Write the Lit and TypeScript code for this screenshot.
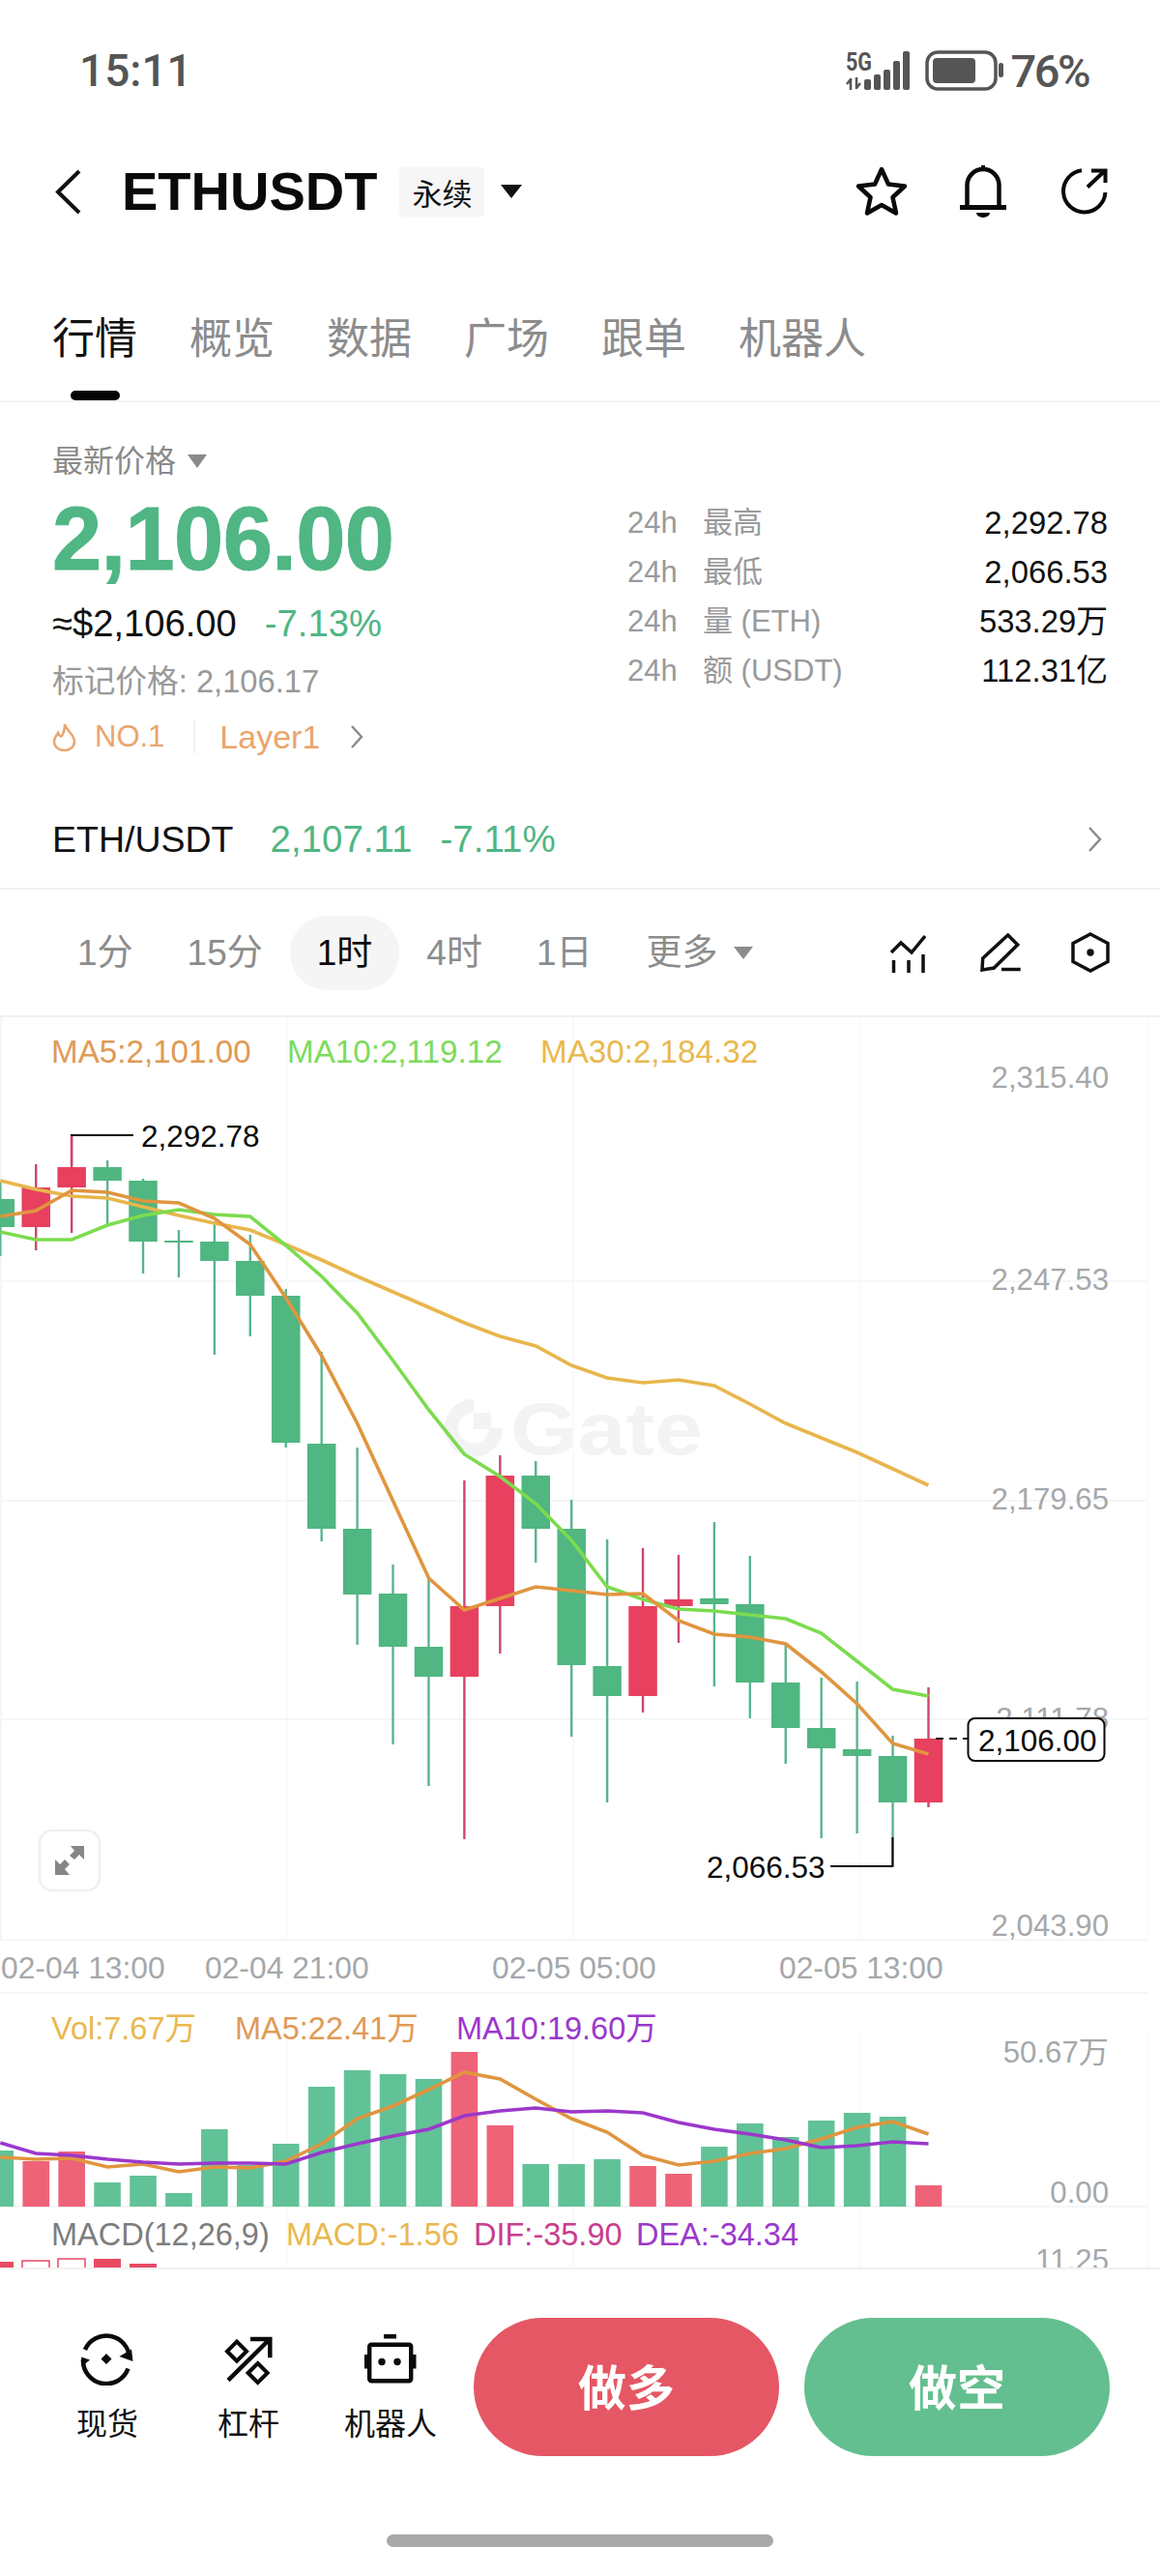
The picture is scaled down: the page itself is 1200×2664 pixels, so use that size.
import { LitElement, html, css, svg } from "lit";
import { customElement } from "lit/decorators.js";

const X = (i: number) => 0.3 + 36.93 * i;
type C = [number, number, number, number, number];
// dir(1 red, 0 green), body top, body bottom, wick top, wick bottom
const candles: C[] = [
  [0,1240,1269,1222,1299],[1,1228,1269,1204,1293],[1,1207,1228,1174,1275],[0,1207,1221,1200,1267],
  [0,1221,1284,1219,1317],[0,1283,1285,1272,1321],[0,1284,1304,1263,1401],[0,1304,1340,1277,1382],
  [0,1340,1492,1333,1497],[0,1493,1581,1398,1594],[0,1581,1649,1497,1701],[0,1648,1703,1618,1804],
  [0,1703,1734,1632,1847],[1,1661,1734,1531,1902],[1,1526,1661,1505,1710],[0,1526,1581,1511,1616],
  [0,1581,1722,1551,1796],[0,1723,1754,1592,1864],[1,1661,1754,1601,1771],[1,1654,1661,1608,1699],
  [0,1653,1659,1574,1744],[0,1659,1740,1609,1777],[0,1740,1787,1699,1824],[0,1787,1808,1735,1901],
  [0,1809,1816,1739,1896],[0,1816,1864,1795,1930],[1,1798,1864,1745,1869],
];
const ma5 = [1258,1252,1231,1233,1242,1244,1260,1287,1342,1402,1472,1552,1632,1665,1653,1641,1645,1649,1648,1676,1690,1693,1700,1729,1762,1803,1814];
const ma10 = [1274,1282,1282,1267,1257,1251,1256,1258,1288,1320,1358,1407,1458,1504,1527,1555,1593,1641,1654,1664,1666,1670,1674,1689,1718,1747,1754];
const ma30 = [1221,1230,1237,1239,1248,1257,1265,1272,1287,1303,1320,1336,1352,1368,1382,1392,1412,1425,1430,1427,1433,1452,1472,1487,1502,1519,1536];
const vols: [number, number][] = [
  [0,2224],[1,2235],[1,2225],[0,2257],[0,2250],[0,2268],[0,2202],[0,2239],[0,2217],[0,2158],[0,2141],[0,2145],[0,2150],[1,2122],
  [1,2198],[0,2238],[0,2238],[0,2233],[1,2240],[1,2248],[0,2220],[0,2196],[0,2210],[0,2193],[0,2185],[0,2189],[1,2260],
];
const volMa5 = [2231,2233,2232,2241,2238,2246,2241,2242,2235,2217,2191,2178,2161,2143,2150,2171,2191,2205,2229,2239,2235,2227,2222,2212,2200,2194,2207];
const volMa10 = [2216,2227,2229,2233,2236,2238,2237,2237,2238,2226,2217,2209,2202,2188,2183,2180,2184,2183,2185,2195,2202,2207,2213,2221,2219,2215,2217];
const pts = (a: number[]) => a.map((y, i) => `${X(i).toFixed(1)},${y}`).join(" ");

@customElement("app-root")
export class AppRoot extends LitElement {
  static styles = css`
    :host { display: block; width: 1200px; height: 2664px; background: #fff; overflow: hidden;
      font-family: "Liberation Sans", "Noto Sans CJK SC", sans-serif; color: #111; }
    svg { display: block; flex: none; }
    .status { height: 146px; display: flex; align-items: center; padding: 0 74px 0 82px; color: #555; }
    .time { font-family: Roboto, sans-serif; font-size: 46px; font-weight: 500; flex: 1; }
    .pct { font-family: Roboto, sans-serif; font-size: 47px; font-weight: 500; margin-left: 7px; letter-spacing: -2.5px; }
    .signal { overflow: visible; }
    .sig-t { font-family: Roboto, sans-serif; font-size: 26px; font-weight: 700; fill: #555; }
    .nav { height: 104px; display: flex; align-items: center; padding: 0 54px 0 57px; }
    .title { font-size: 56px; font-weight: 700; margin-left: 42px; color: #0a0a0a; line-height: 64px; }
    .tag { margin-left: 23px; width: 88px; height: 51px; background: #f6f6f6; border-radius: 4px; font-size: 31px; display: flex; align-items: center; justify-content: center; color: #111; }
    .caret { margin-left: 17px; }
    .nav-icons { margin-left: auto; display: flex; align-items: center; }
    .tabs { display: flex; gap: 54px; padding: 75px 0 0 54px; border-bottom: 2px solid #f3f3f3; }
    .tab { display: flex; flex-direction: column; align-items: center; font-size: 44px; line-height: 52px; color: #8c8c8c; }
    .tab.on { color: #111; }
    .ind { margin-top: 27px; width: 51px; height: 10px; border-radius: 5px; }
    .on .ind { background: #050505; }
    .info { display: flex; justify-content: space-between; padding: 39px 54px 0; }
    .left { display: flex; flex-direction: column; }
    .label { display: flex; align-items: center; gap: 12px; font-size: 32px; line-height: 44px; color: #8a8a8a; }
    .price { margin-top: 12px; font-size: 92px; line-height: 92px; font-weight: 700; color: #4fb684; letter-spacing: -0.6px; -webkit-text-stroke: 1px #4fb684; }
    .sub { margin-top: 20px; font-size: 38.2px; line-height: 44px; color: #111; display: flex; gap: 29px; }
    .green { color: #4fb684; }
    .mark { margin-top: 16px; font-size: 32.7px; line-height: 44px; color: #999; }
    .hot { margin-top: 13px; height: 44px; display: flex; align-items: center; font-size: 31px; line-height: 44px; color: #e9a56d; }
    .no { margin-left: 19px; }
    .layer { font-size: 34px; }
    .sep { width: 2px; height: 34px; background: #f1f1f1; margin: 0 25px 0 30px; }
    .chev { margin-left: 31px; }
    .stats { width: 497px; padding-top: 60px; display: grid; grid-template-columns: 78px 1fr auto; grid-auto-rows: 51px; line-height: 51px; font-size: 31px; color: #9a9a9a; }
    .stats .v { color: #111; font-size: 32.8px; text-align: right; }
    .pair { display: flex; align-items: center; height: 44px; padding: 62px 60px 28px 54px; font-size: 37.5px; border-bottom: 2px solid #f1f1f1; }
    .pair .n { color: #111; }
    .pair .g { margin-left: 38px; font-size: 38.5px; color: #4fb684; display: flex; gap: 29px; }
    .pair svg { margin-left: auto; }
    .ivals { height: 130px; display: flex; align-items: center; padding: 0 52px; border-bottom: 2px solid #f1f1f1; }
    .iv { font-size: 37px; height: 77px; line-height: 77px; padding: 0 28px; color: #8c8c8c; border-radius: 38px; display: flex; align-items: center; gap: 17px; }
    .iv.on { background: #f5f5f5; color: #0a0a0a; }
    .tools { margin-left: auto; display: flex; align-items: center; }
    .chart text { font-family: "Liberation Sans", "Noto Sans CJK SC", sans-serif; }
    .ax { font-size: 31.2px; fill: #a5a8ab; }
    .tm { font-size: 31.8px; fill: #a5a8ab; }
    .lg { font-size: 32.5px; }
    .lg2 { font-size: 33.2px; }
    .lb { font-size: 31.5px; fill: #0a0a0a; }
    .wm { font-size: 76px; font-weight: 700; fill: #f1f3f4; }
    .chart { border-bottom: 2px solid #f1f1f1; }
    .foot { display: flex; flex-direction: column; align-items: center; }
    .row { display: flex; width: 100%; box-sizing: border-box; padding: 50px 52px 0 38px; }
    .tool { width: 146px; display: flex; flex-direction: column; align-items: center; padding-top: 16px; font-size: 32px; line-height: 44px; color: #111; }
    .tool svg { height: 54px; margin-bottom: 18px; }
    .tool.w { width: 148px; margin-right: 12px; }
    .btn { width: 316px; height: 143px; box-sizing: border-box; padding-bottom: 5px; border-radius: 72px; font-size: 50px; font-weight: 700; color: #fff; display: flex; align-items: center; justify-content: center; }
    .btn.r { background: #e55764; margin-right: 26px; }
    .btn.g { background: #63bf8f; }
    .home { margin-top: 81px; width: 400px; height: 13px; border-radius: 7px; background: #a9a9a9; }
  `;

  chart() {
    const col = [297, 593, 890, 1187];
    return svg`
      ${[1325, 1552, 1778, 2006, 2061, 2282].map((y) => svg`<line x1="0" x2="1187" y1=${y} y2=${y} stroke="#f5f6f7" stroke-width="2"/>`)}
      ${col.map((x) => svg`<line x1=${x} x2=${x} y1="1052" y2="2006" stroke="#f7f8f8" stroke-width="1.5"/>`)}
      ${col.map((x) => svg`<line x1=${x} x2=${x} y1="2106" y2="2345" stroke="#f7f8f8" stroke-width="1.5"/>`)}
      <line x1="1" x2="1" y1="1052" y2="2006" stroke="#f5f6f7" stroke-width="2"/>

      <path d="M490 1453.700A23 23 0 1 0 513 1476.700" fill="none" stroke="#f1f3f4" stroke-width="14"/>
      <rect x="490" y="1461" width="18" height="17" fill="#f1f3f4"/>
      <text class="wm" x="528" y="1504" textLength="199" lengthAdjust="spacingAndGlyphs">Gate</text>

      <text class="ax" x="1147" y="1125" text-anchor="end">2,315.40</text>
      <text class="ax" x="1147" y="1334" text-anchor="end">2,247.53</text>
      <text class="ax" x="1147" y="1561" text-anchor="end">2,179.65</text>
      <text class="ax" x="1147" y="1788" text-anchor="end">2,111.78</text>
      <text class="ax" x="1147" y="2002" text-anchor="end">2,043.90</text>

      ${candles.map(([d, t, b, wt, wb], i) => svg`
        <line x1=${X(i)} x2=${X(i)} y1=${wt} y2=${wb} stroke=${d ? "#d0456a" : "#58b48c"} stroke-width="2.400"/>
        <rect x=${X(i) - 14.75} y=${t} width="29.500" height=${b - t} fill=${d ? "#e8405f" : "#50b682"}/>
      `)}
      <polyline points=${pts(ma30)} fill="none" stroke="#e8b64c" stroke-width="3.600"/>
      <polyline points=${pts(ma10)} fill="none" stroke="#7ddb4f" stroke-width="3.600"/>
      <polyline points=${pts(ma5)} fill="none" stroke="#e0953f" stroke-width="3.600"/>

      <text class="lg2" x="53" y="1099" fill="#e09a55">MA5:2,101.00</text>
      <text class="lg2" x="297" y="1099" fill="#7ddb5c">MA10:2,119.12</text>
      <text class="lg2" x="559" y="1099" fill="#e9b84f">MA30:2,184.32</text>

      <polyline points="74,1194 74,1174 138,1174" fill="none" stroke="#0a0a0a" stroke-width="2"/>
      <line x1="74" x2="74" y1="1175" y2="1205" stroke="#d0456a" stroke-width="2.400"/>
      <text class="lb" x="146" y="1186">2,292.78</text>
      <polyline points="923.400,1900 923.400,1930 859,1930" fill="none" stroke="#0a0a0a" stroke-width="2"/>
      <text class="lb" x="731" y="1942">2,066.53</text>
      <line x1="968" x2="1001" y1="1798" y2="1798" stroke="#0a0a0a" stroke-width="2" stroke-dasharray="8 6"/>
      <rect x="1001.500" y="1777" width="141" height="44" rx="7" fill="#fff" stroke="#0a0a0a" stroke-width="2"/>
      <text class="lb" x="1012" y="1811">2,106.00</text>

      <rect x="41" y="1893" width="62" height="62" rx="13" fill="#fff" stroke="#f0f0f0" stroke-width="2.500"/>
      <path d="M73 1909h14v14l-5-5-5 5-5-4 5-5zM57 1939v-16l5 5 5-5 5 5-5 5 5 6z" fill="#868686"/>

      <text class="tm" x="1" y="2046">02-04 13:00</text>
      <text class="tm" x="212" y="2046">02-04 21:00</text>
      <text class="tm" x="509" y="2046">02-05 05:00</text>
      <text class="tm" x="806" y="2046">02-05 13:00</text>

      <text class="lg" x="53" y="2109" fill="#e9b84f">Vol:7.67万</text>
      <text class="lg" x="243" y="2109" fill="#e09a55">MA5:22.41万</text>
      <text class="lg" x="472" y="2109" fill="#9b38cc">MA10:19.60万</text>
      <text class="ax" x="1147" y="2133" text-anchor="end">50.67万</text>
      <text class="ax" x="1147" y="2278" text-anchor="end">0.00</text>

      ${vols.map(([d, t], i) => svg`<rect x=${X(i) - 13.8} y=${t} width="27.600" height=${2282 - t} fill=${d ? "#ee6378" : "#62c297"}/>`)}
      <polyline points=${pts(volMa5)} fill="none" stroke="#e0953f" stroke-width="3.600"/>
      <polyline points=${pts(volMa10)} fill="none" stroke="#9b38cc" stroke-width="3.600"/>

      <text class="lg" x="53" y="2322" fill="#7d7d7d">MACD(12,26,9)</text>
      <text class="lg" x="296" y="2322" fill="#e9b84f">MACD:-1.56</text>
      <text class="lg" x="490" y="2322" fill="#c83e8e">DIF:-35.90</text>
      <text class="lg" x="658" y="2322" fill="#9b38cc">DEA:-34.34</text>
      <text class="ax" x="1147" y="2348" text-anchor="end">11.25</text>

      <rect x="-14" y="2339" width="28" height="8" fill="#e84a64"/>
      <rect x="23" y="2338" width="28" height="9" fill="#fff" stroke="#e84a64" stroke-width="1.500"/>
      <rect x="60" y="2336" width="28" height="11" fill="#fff" stroke="#e84a64" stroke-width="1.500"/>
      <rect x="97" y="2336" width="28" height="11" fill="#e84a64"/>
      <rect x="134" y="2341" width="28" height="6" fill="#e84a64"/>
    `;
  }

  render() {
    return html`
      <div class="status">
        <span class="time">15:11</span>
        <svg class="signal" width="66" height="42" viewBox="0 0 66 42">
          <text class="sig-t" x="0" y="21" textLength="27" lengthAdjust="spacingAndGlyphs">5G</text>
          <path d="M5 41V29M1 35l4-5M11 28V40M15 34l-4 5" fill="none" stroke="#555" stroke-width="2.500"/>
          <g fill="#555"><rect x="19" y="30" width="7" height="11" rx="2"/><rect x="29" y="25" width="7" height="16" rx="2"/><rect x="39" y="20" width="7" height="21" rx="2"/><rect x="49" y="11" width="7" height="30" rx="2"/><rect x="59" y="1" width="7" height="40" rx="2"/></g>
        </svg>
        <svg style="margin-left:16px" width="81" height="42" viewBox="0 0 81 42">
          <rect x="2" y="2" width="71" height="38" rx="11" fill="none" stroke="#555" stroke-width="3.500"/>
          <rect x="8" y="8" width="44" height="26" rx="4" fill="#555"/>
          <rect x="76" y="13" width="5" height="15" rx="2.500" fill="#555"/>
        </svg>
        <span class="pct">76%</span>
      </div>

      <div class="nav">
        <svg width="27" height="47" viewBox="0 0 27 47"><path d="M25 2 3 23.500 25 45" fill="none" stroke="#111" stroke-width="4"/></svg>
        <span class="title">ETHUSDT</span>
        <span class="tag">永续</span>
        <svg class="caret" width="22" height="14" viewBox="0 0 22 14"><path d="M0 0h22L11 14z" fill="#111"/></svg>
        <div class="nav-icons">
          <svg width="56" height="52" viewBox="0 0 56 52"><path d="M28 3 35 18.500 52 20.500 39.500 32 43 48.500 28 40 13 48.500 16.500 32 4 20.500 21 18.500Z" fill="none" stroke="#0a0a0a" stroke-width="4.500" stroke-linejoin="round"/></svg>
          <svg style="margin-left:53px" width="48" height="54" viewBox="0 0 48 54"><path d="M7.500 43V20.500a16.500 16.500 0 0 1 33 0V43" fill="none" stroke="#0a0a0a" stroke-width="4.500"/><path d="M0 41h48v5H0zM22 0h4v6h-4zM17 49h14a7 5 0 0 1-14 0z" fill="#0a0a0a"/></svg>
          <svg style="margin-left:57px" width="48" height="48" viewBox="0 0 48 48"><path d="M21 2.200A21.700 21.700 0 1 0 45.400 25" fill="none" stroke="#0a0a0a" stroke-width="4"/><path d="M27 19.500 45 2.500M31 2.500h14.500V15" fill="none" stroke="#0a0a0a" stroke-width="4"/></svg>
        </div>
      </div>

      <div class="tabs">
        ${["行情", "概览", "数据", "广场", "跟单", "机器人"].map((t, i) => html`<div class="tab ${i === 0 ? "on" : ""}">${t}<div class="ind"></div></div>`)}
      </div>

      <div class="info">
        <div class="left">
          <div class="label">最新价格 <svg width="20" height="14" viewBox="0 0 20 14"><path d="M0 0h20L10 14z" fill="#8a8a8a"/></svg></div>
          <div class="price">2,106.00</div>
          <div class="sub"><span>≈$2,106.00</span><span class="green">-7.13%</span></div>
          <div class="mark">标记价格: 2,106.17</div>
          <div class="hot">
            <svg width="25" height="30" viewBox="0 0 25 30"><path d="M13 2C14 8 23 12 23 20A10.500 9 0 0 1 2 20C2 16 5 13 6 11 7 14 9 15 10 14 12 11 13 6 13 2Z" fill="none" stroke="#e9a56d" stroke-width="2.500"/></svg>
            <span class="no">NO.1</span><span class="sep"></span><span class="layer">Layer1</span>
            <svg class="chev" width="14" height="24" viewBox="0 0 14 24"><path d="M2 1l10 11L2 23" fill="none" stroke="#8c8c8c" stroke-width="2.500"/></svg>
          </div>
        </div>
        <div class="stats">
          <span>24h</span><span>最高</span><span class="v">2,292.78</span>
          <span>24h</span><span>最低</span><span class="v">2,066.53</span>
          <span>24h</span><span>量 (ETH)</span><span class="v">533.29万</span>
          <span>24h</span><span>额 (USDT)</span><span class="v">112.31亿</span>
        </div>
      </div>

      <div class="pair">
        <span class="n">ETH/USDT</span>
        <span class="g"><span>2,107.11</span><span>-7.11%</span></span>
        <svg width="15" height="26" viewBox="0 0 15 26"><path d="M2 1l11 12L2 25" fill="none" stroke="#8c8c8c" stroke-width="2.500"/></svg>
      </div>

      <div class="ivals">
        <span class="iv">1分</span><span class="iv">15分</span><span class="iv on">1时</span><span class="iv">4时</span><span class="iv">1日</span>
        <span class="iv">更多 <svg width="20" height="13" viewBox="0 0 20 13"><path d="M0 0h20L10 13z" fill="#8c8c8c"/></svg></span>
        <div class="tools">
          <svg width="38" height="41" viewBox="0 0 38 41"><path d="M2 20 12 10 23 20 37 3" fill="none" stroke="#111" stroke-width="3.500"/><path d="M4.500 28V41M20 28V41M35 22V41" stroke="#111" stroke-width="3.500"/></svg>
          <svg style="margin-left:56px" width="42" height="40" viewBox="0 0 42 40"><path d="M28.700 2 38.700 12 14.300 36 2 38 2.700 26ZM22 37.500H41.700" fill="none" stroke="#111" stroke-width="3.500"/></svg>
          <svg style="margin-left:52px" width="40" height="42" viewBox="0 0 40 42"><path d="M20 2 38 11.500V30.500L20 40 2 30.500V11.500Z" fill="none" stroke="#111" stroke-width="3.500"/><circle cx="20" cy="21" r="3.700" fill="#111"/></svg>
        </div>
      </div>

      <svg class="chart" width="1200" height="1293" viewBox="0 1052 1200 1293">${this.chart()}</svg>

      <div class="foot">
        <div class="row">
          <div class="tool">
            <svg width="56" height="54" viewBox="0 0 56 54"><path d="M5 17A24 24 0 0 1 51 26M49.500 36.500A24 24 0 0 1 3 27" fill="none" stroke="#0a0a0a" stroke-width="4.500"/><path d="M40.500 24 54.500 29 53 16.500ZM1 24.500 10 27.500 2 34ZM27 21l5.500 5.500-5.500 5.500-5.500-5.500z" fill="#0a0a0a"/></svg>
            现货
          </div>
          <div class="tool">
            <svg width="50" height="54" viewBox="0 0 50 54"><path d="M4 48.700 47 6M27 6H47.300V25.300" fill="none" stroke="#0a0a0a" stroke-width="4.500"/><path d="M13 8.700 23 18.700 13 28.700 3 18.700ZM34.700 31 44.700 41 34.700 51 24.700 41Z" fill="none" stroke="#0a0a0a" stroke-width="4"/></svg>
            杠杆
          </div>
          <div class="tool w">
            <svg width="54" height="54" viewBox="0 0 54 54"><path d="M20 1h13v4.500H20zM0 22h3.500v14.500H0zM50 22h3.500v14.500H50z" fill="#0a0a0a"/><rect x="5.200" y="11.700" width="43" height="37.500" rx="2" fill="none" stroke="#0a0a0a" stroke-width="4.400"/><circle cx="18" cy="29.500" r="3.700" fill="#0a0a0a"/><circle cx="34" cy="29.500" r="3.700" fill="#0a0a0a"/></svg>
            机器人
          </div>
          <div class="btn r">做多</div>
          <div class="btn g">做空</div>
        </div>
        <div class="home"></div>
      </div>
    `;
  }
}
